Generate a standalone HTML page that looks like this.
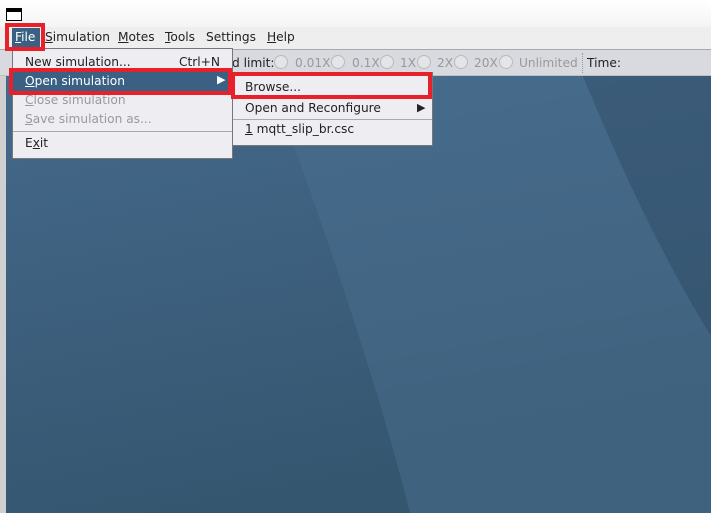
<!DOCTYPE html>
<html><head><style>
*{margin:0;padding:0;box-sizing:border-box}
body{width:711px;height:513px;overflow:hidden;position:relative;background:#fff;font-family:"DejaVu Sans","Liberation Sans",sans-serif;font-size:12.2px;color:#222}
.a{position:absolute;white-space:nowrap}
u{text-decoration:underline}
.dis{color:#9a9a9a}
.red{position:absolute;border:4px solid #e8202a}
.r{position:absolute;top:55px;width:14px;height:14px;border:1px solid #bbb;border-radius:50%;background:#e4e5e8}
.t{position:absolute;top:56px;color:#999;white-space:nowrap}
</style></head><body>
<div class="a" style="left:0;top:0;width:711px;height:27px;background:linear-gradient(#fff,#f4f4f4)"></div>
<div class="a" style="left:6px;top:8px;width:16px;height:13px;border:1.5px solid #000;border-top-width:4px;background:#fff"></div>
<div class="a" style="left:0;top:27px;width:711px;height:22px;background:#eeeeef"></div>
<div class="a" style="left:0;top:49px;width:711px;height:27px;background:#d9dadf;border-top:1px solid #a8a9b0;border-bottom:1px solid #c0c0c4"></div>
<div class="a" style="left:0;top:76px;width:6px;height:437px;background:#d0d0d0"></div>
<svg class="a" style="left:6px;top:76px" width="705" height="437">
<defs><linearGradient id="g" x1="0" y1="0" x2="0.3" y2="1"><stop offset="0" stop-color="#45698c"/><stop offset="1" stop-color="#35566f"/></linearGradient></defs>
<rect width="705" height="437" fill="url(#g)"/>
<path d="M262 0 C330 180 380 340 404 437 L705 437 L705 260 C650 170 610 80 577 0 Z" fill="#4b7090" opacity=".45"/>
<path d="M577 0 C610 80 650 170 705 260 L705 0 Z" fill="#34546f" opacity=".55"/>
</svg>
<div class="a" style="left:12px;top:28px;width:28px;height:19px;background:#3a6184"></div>
<div class="a" style="left:15px;top:30px;color:#fff"><u>F</u>ile</div>
<div class="a" style="left:45px;top:30px"><u>S</u>imulation</div>
<div class="a" style="left:118px;top:30px"><u>M</u>otes</div>
<div class="a" style="left:165px;top:30px"><u>T</u>ools</div>
<div class="a" style="left:206px;top:30px">Settings</div>
<div class="a" style="left:267px;top:30px"><u>H</u>elp</div>
<div class="a" style="left:232px;top:56px">d limit:</div>
<div class="r" style="left:274px"></div><div class="t" style="left:295px">0.01X</div>
<div class="r" style="left:331px"></div><div class="t" style="left:352px">0.1X</div>
<div class="r" style="left:380px"></div><div class="t" style="left:400px">1X</div>
<div class="r" style="left:417px"></div><div class="t" style="left:437px">2X</div>
<div class="r" style="left:454px"></div><div class="t" style="left:474px">20X</div>
<div class="r" style="left:499px"></div><div class="t" style="left:519px">Unlimited</div>
<div class="a" style="left:582px;top:53px;height:20px;border-left:1px dotted #999"></div>
<div class="a" style="left:587px;top:56px">Time:</div>
<!-- File menu -->
<div class="a" style="left:12px;top:48px;width:221px;height:111px;background:#eeeef2;border:1px solid #777"></div>
<div class="a" style="left:25px;top:55px">New simulation...</div>
<div class="a" style="left:179px;top:55px">Ctrl+N</div>
<div class="a" style="left:13px;top:71px;width:219px;height:20px;background:#3a6184"></div>
<div class="a" style="left:25px;top:74px;color:#fff"><u>O</u>pen simulation</div>
<div class="a" style="left:217px;top:73px;color:#fff;font-size:11px">▶</div>
<div class="a dis" style="left:25px;top:93px"><u>C</u>lose simulation</div>
<div class="a dis" style="left:25px;top:112px"><u>S</u>ave simulation as...</div>
<div class="a" style="left:13px;top:131px;width:219px;border-top:1px solid #aaa"></div>
<div class="a" style="left:25px;top:136px">E<u>x</u>it</div>
<!-- submenu -->
<div class="a" style="left:232px;top:72px;width:201px;height:74px;background:#eeeef2;border:1px solid #777"></div>
<div class="a" style="left:245px;top:80px">Browse...</div>
<div class="a" style="left:233px;top:98px;width:199px;border-top:1px solid #aaa"></div>
<div class="a" style="left:245px;top:101px">Open and Reconfigure</div>
<div class="a" style="left:417px;top:101px;font-size:11px">▶</div>
<div class="a" style="left:233px;top:119px;width:199px;border-top:1px solid #aaa"></div>
<div class="a" style="left:245px;top:122px"><u>1</u> mqtt_slip_br.csc</div>
<!-- red boxes -->
<div class="red" style="left:5px;top:23px;width:40px;height:28px"></div>
<div class="red" style="left:9px;top:68px;width:223px;height:27px"></div>
<div class="red" style="left:231px;top:72px;width:201px;height:27px"></div>
</body></html>
